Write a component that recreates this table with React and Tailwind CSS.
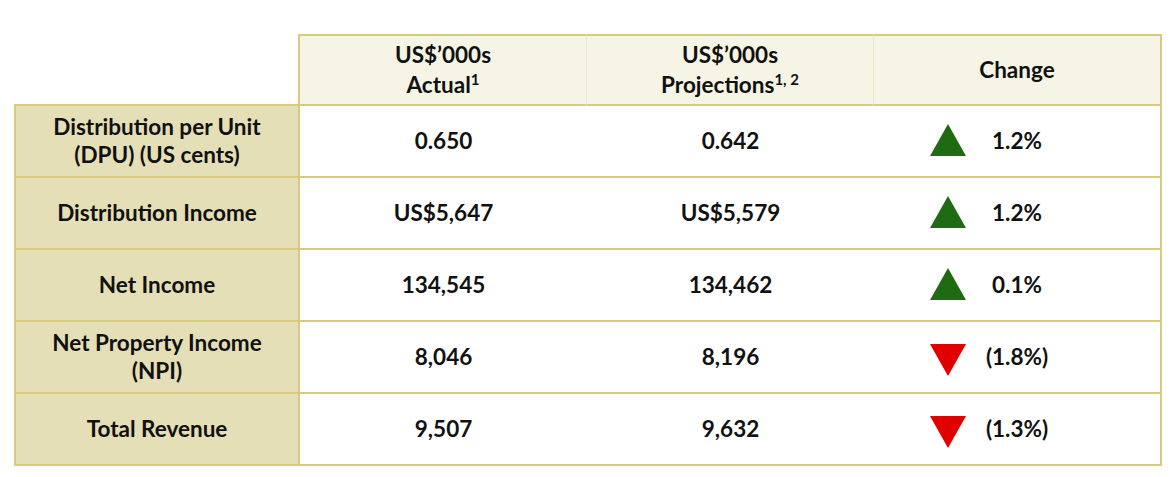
const rows = [
  { label: ["Distribution per Unit", "(DPU) (US cents)"], actual: "0.650", proj: "0.642", change: "1.2%", up: true },
  { label: ["Distribution Income"], actual: "US$5,647", proj: "US$5,579", change: "1.2%", up: true },
  { label: ["Net Income"], actual: "134,545", proj: "134,462", change: "0.1%", up: true },
  { label: ["Net Property Income", "(NPI)"], actual: "8,046", proj: "8,196", change: "(1.8%)", up: false },
  { label: ["Total Revenue"], actual: "9,507", proj: "9,632", change: "(1.3%)", up: false },
];

const Arrow = ({ up }) =>
  up ? (
    <svg width="36" height="32" viewBox="0 0 36 32" className="-mt-[3px]">
      <polygon points="18,0 36,32 0,32" fill="#1f6b12" />
    </svg>
  ) : (
    <svg width="36" height="32" viewBox="0 0 36 32" className="mt-[6px]">
      <polygon points="0,0 36,0 18,32" fill="#e00000" />
    </svg>
  );

export default function App() {
  return (
    <div className="w-[1172px] h-[477px] bg-white pt-[34px] pl-[14px] text-[#111] font-bold text-[22.5px] font-['Lato','Liberation_Sans',sans-serif]">
      <div className="grid grid-cols-[286px_287px_287px_288px]">
        {/* header */}
        <div className="h-[72px] border-r-2 border-b-2 border-[#d5cc7f]" />
        <div className="h-[72px] flex flex-col items-center justify-center leading-[30px] bg-[#f6f4e5] border-t-2 border-b-2 border-[#d5cc7f] border-r border-r-[#ebe6c9]">
          <span>US$’000s</span>
          <span>
            Actual<sup className="text-[15px] -top-[8px]">1</sup>
          </span>
        </div>
        <div className="h-[72px] flex flex-col items-center justify-center leading-[30px] bg-[#f6f4e5] border-t-2 border-b-2 border-[#d5cc7f] border-r border-r-[#ebe6c9]">
          <span>US$’000s</span>
          <span>
            Projections<sup className="text-[15px] -top-[8px]">1, 2</sup>
          </span>
        </div>
        <div className="h-[72px] flex items-center justify-center bg-[#f6f4e5] border-t-2 border-b-2 border-r-2 border-[#d5cc7f]">
          Change
        </div>

        {rows.map((r) => (
          <div key={r.label[0]} className="contents">
            <div className="h-[72px] flex flex-col items-center justify-center leading-[28px] text-center bg-[#e4dfb6] border-l-2 border-r-2 border-b-2 border-[#d5cc7f]">
              {r.label.map((l) => (
                <span key={l}>{l}</span>
              ))}
            </div>
            <div className="h-[72px] flex items-center justify-center border-b-2 border-[#d5cc7f]">
              {r.actual}
            </div>
            <div className="h-[72px] flex items-center justify-center border-b-2 border-[#d5cc7f]">
              {r.proj}
            </div>
            <div className="h-[72px] grid grid-cols-[1fr_auto_1fr] items-center border-b-2 border-r-2 border-[#d5cc7f]">
              <div className="ml-[56px] flex">
                <Arrow up={r.up} />
              </div>
              <span>{r.change}</span>
              <div />
            </div>
          </div>
        ))}
      </div>
    </div>
  );
}
